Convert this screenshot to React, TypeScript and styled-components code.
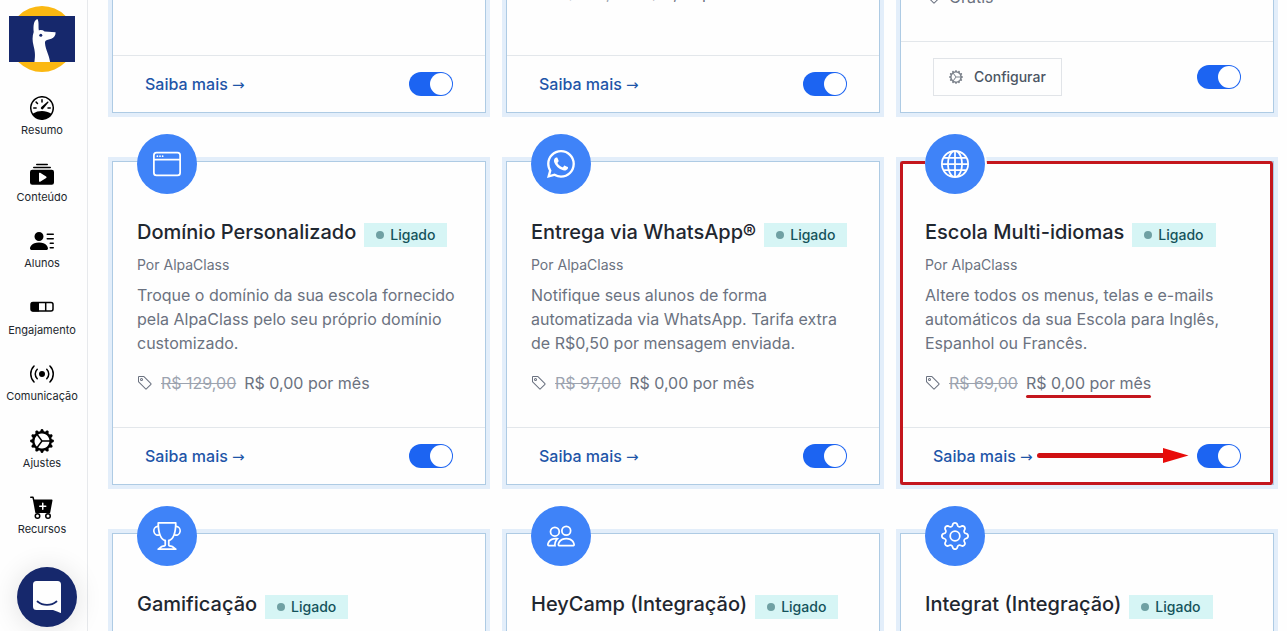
import React from "react";
import styled, { createGlobalStyle, css } from "styled-components";
import {
  BsBroadcast,
  BsCartPlusFill,
  BsCollectionPlayFill,
  BsGear,
  BsGearWideConnected,
  BsGlobe,
  BsPeople,
  BsPersonLinesFill,
  BsSpeedometer,
  BsTag,
  BsTrophy,
  BsWhatsapp,
  BsWindow,
} from "react-icons/bs";

const RED = "#c4161d";

const GlobalStyle = createGlobalStyle`
  *, *::before, *::after { box-sizing: border-box; }
  body {
    margin: 0;
    background: #fefefe;
    color: #1f2730;
    font-family: Inter, "Liberation Sans", sans-serif;
    font-size: 16px;
    line-height: 24px;
  }
  h2, p { margin: 0; }
  a { color: inherit; text-decoration: none; }
`;

const Page = styled.div`
  display: flex;
  height: 100vh;
  overflow: hidden;
`;

const Sidebar = styled.aside`
  display: flex;
  flex: none;
  flex-direction: column;
  align-items: center;
  gap: 24px;
  width: 88px;
  padding: 6px 3px 0 0;
  border-right: 1px solid #e7e9ec;
`;

const HomeLink = styled.a`
  display: flex;
`;

const Nav = styled.nav`
  display: flex;
  flex-direction: column;
  justify-content: space-between;
  height: 441px;
`;

const NavLink = styled.a`
  display: flex;
  flex-direction: column;
  align-items: center;
  gap: 2px;
  color: #000;
  svg {
    width: 24px;
    height: 24px;
  }
`;

const NavLabel = styled.span`
  font-size: 11px;
  line-height: 16px;
  color: #22272d;
`;

const Main = styled.main`
  flex: 1;
  min-width: 0;
  padding: 0 13px 0 24px;
`;

const Grid = styled.div`
  display: grid;
  grid-template-columns: repeat(3, minmax(0, 1fr));
  gap: 48px 20px;
  margin-top: -211px;
`;

const Medallion = styled.div`
  position: relative;
  display: grid;
  place-items: center;
  width: 60px;
  height: 60px;
  margin: -28px 0 23px;
  border-radius: 50%;
  background: #3f83f8;
  color: #fff;
  svg {
    width: 28px;
    height: 28px;
  }
`;

const Card = styled.article<{ $highlight?: boolean }>`
  position: relative;
  display: flex;
  flex-direction: column;
  min-height: 324px;
  border: 1px solid #aecbe4;
  background: #fefefe;
  box-shadow: 0 0 0 4px #e3eefa;
  ${(p) =>
    p.$highlight &&
    css`
      &::before {
        content: "";
        position: absolute;
        inset: -1px 0 -1px -1px;
        border: 3px solid ${RED};
        border-radius: 3px;
        pointer-events: none;
      }
      ${Medallion} {
        box-shadow: 1px 0 0 1px #fefefe;
      }
    `}
`;

const Body = styled.div<{ $end?: boolean; $bottom?: number }>`
  display: flex;
  flex: 1;
  flex-direction: column;
  align-items: flex-start;
  justify-content: ${(p) => (p.$end ? "flex-end" : "flex-start")};
  padding: 0 24px ${(p) => p.$bottom ?? 32}px;
`;

const TitleRow = styled.div`
  display: flex;
  align-items: flex-end;
  gap: 8px;
  margin-bottom: 8px;
`;

const Title = styled.h2`
  font-size: 20px;
  font-weight: 500;
  line-height: 30px;
  white-space: nowrap;
`;

const Badge = styled.span`
  display: inline-flex;
  align-items: center;
  gap: 6px;
  padding: 0 12px;
  background: #d6f5f5;
  color: #14535b;
  font-size: 14px;
  font-weight: 500;
  line-height: 24px;
  &::before {
    content: "";
    width: 8px;
    height: 8px;
    border-radius: 50%;
    background: #6fa0a3;
  }
`;

const Author = styled.p`
  margin-bottom: 8px;
  color: #6b7280;
  font-size: 14px;
  line-height: 20px;
`;

const Description = styled.p`
  margin-bottom: 16px;
  color: #6b7280;
`;

const PriceRow = styled.div`
  display: flex;
  align-items: center;
  gap: 8px;
  color: #6b7280;
  white-space: nowrap;
  svg {
    width: 16px;
    height: 16px;
  }
`;

const OldPrice = styled.s`
  color: #9ca3af;
`;

const Price = styled.span<{ $underlined?: boolean }>`
  position: relative;
  ${(p) =>
    p.$underlined &&
    css`
      &::after {
        content: "";
        position: absolute;
        right: 0;
        bottom: -3px;
        left: 0;
        height: 3px;
        border-radius: 2px;
        background: ${RED};
      }
    `}
`;

const Footer = styled.footer`
  display: flex;
  align-items: center;
  justify-content: space-between;
  padding: 16px 32px;
  border-top: 1px solid #e3e7eb;
`;

const LearnMore = styled.a`
  color: #1e55a8;
  font-weight: 500;
  white-space: nowrap;
`;

const LinkArrow = styled.span`
  font-family: "DejaVu Sans", sans-serif;
  font-size: 15px;
  font-weight: 400;
  line-height: 14px;
`;

const ConfigureButton = styled.button`
  display: inline-flex;
  align-items: center;
  gap: 11px;
  height: 38px;
  padding: 0 15px;
  border: 1px solid #e1e4e8;
  background: #fefefe;
  color: #4b5563;
  font: 500 14px/20px Inter, "Liberation Sans", sans-serif;
  svg {
    width: 14px;
    height: 14px;
    color: #7d838c;
  }
`;

const Toggle = styled.input`
  appearance: none;
  flex: none;
  width: 44px;
  height: 24px;
  margin: 0;
  padding: 1px;
  border-radius: 12px;
  background: #d1d5db;
  cursor: pointer;
  &::before {
    content: "";
    display: block;
    width: 22px;
    height: 22px;
    border-radius: 50%;
    background: #fff;
  }
  &:checked {
    background: #1c64f2;
  }
  &:checked::before {
    margin-left: auto;
  }
`;

const Arrow = styled.svg`
  flex: none;
  margin: 0 8px 0 auto;
`;

const ChatButton = styled.button`
  position: fixed;
  bottom: 4px;
  left: 17px;
  display: grid;
  place-items: center;
  width: 60px;
  height: 60px;
  padding: 0;
  border: 0;
  border-radius: 50%;
  background: #16286c;
  box-shadow: 0 2px 28px rgba(0, 0, 0, 0.12);
`;

function Logo() {
  return (
    <svg width="66" height="66" viewBox="0 0 66 66" role="img" aria-label="AlpaClass">
      <circle cx="33" cy="33" r="33" fill="#fbb812" />
      <path fill="#16286c" d="M0 10h66v46H0z" />
      <path
        fill="#fefefe"
        d="M25.4 56c1.2-7.500.4-11-.9-16.500-1.200-4.800-1.300-9 .2-13.500C24.200 20 24.600 14.300 28.400 13c1.900 3.200.7 7.600 1.500 11.400 2.200-.7 4.100-.200 5.700 1l11 .8c.2 2.900-1.600 5.700-4.300 6.500l-4.200 1.200c-1.800.6-2.300 1.600-2.100 3.300.6 6.600 4.200 11.600 5.100 18.800z"
      />
      <circle cx="31.800" cy="29.300" r="1.500" fill="#16286c" />
    </svg>
  );
}

function SegmentsIcon() {
  return (
    <svg viewBox="0 0 24 24" aria-hidden="true">
      <rect x="1" y="6.500" width="22" height="8.500" rx="2" fill="none" stroke="currentColor" strokeWidth="1.500" />
      <path d="M3 6h6v9.500H3a2 2 0 0 1-2-2V8a2 2 0 0 1 2-2z" fill="currentColor" />
      <path d="M15.700 6.500v8.500" stroke="currentColor" strokeWidth="1.500" />
    </svg>
  );
}

const navItems = [
  { label: "Resumo", icon: <BsSpeedometer /> },
  { label: "Conteúdo", icon: <BsCollectionPlayFill /> },
  { label: "Alunos", icon: <BsPersonLinesFill /> },
  { label: "Engajamento", icon: <SegmentsIcon /> },
  { label: "Comunicação", icon: <BsBroadcast /> },
  { label: "Ajustes", icon: <BsGearWideConnected /> },
  { label: "Recursos", icon: <BsCartPlusFill /> },
];

type App = {
  title: string;
  icon: React.ReactNode;
  description?: string;
  oldPrice?: string;
  highlight?: boolean;
};

const apps: App[] = [
  {
    title: "Domínio Personalizado",
    icon: <BsWindow />,
    description:
      "Troque o domínio da sua escola fornecido pela AlpaClass pelo seu próprio domínio customizado.",
    oldPrice: "R$ 129,00",
  },
  {
    title: "Entrega via WhatsApp®",
    icon: <BsWhatsapp />,
    description:
      "Notifique seus alunos de forma automatizada via WhatsApp. Tarifa extra de R$0,50 por mensagem enviada.",
    oldPrice: "R$ 97,00",
  },
  {
    title: "Escola Multi-idiomas",
    icon: <BsGlobe />,
    description:
      "Altere todos os menus, telas e e-mails automáticos da sua Escola para Inglês, Espanhol ou Francês.",
    oldPrice: "R$ 69,00",
    highlight: true,
  },
  { title: "Gamificação", icon: <BsTrophy /> },
  { title: "HeyCamp (Integração)", icon: <BsPeople /> },
  { title: "Integrat (Integração)", icon: <BsGear /> },
];

function CardFooter({ name, highlight }: { name: string; highlight?: boolean }) {
  return (
    <Footer>
      <LearnMore href="#">
        Saiba mais <LinkArrow>→</LinkArrow>
      </LearnMore>
      {highlight && (
        <Arrow width="152" height="16" viewBox="0 0 152 16" aria-hidden="true">
          <path d="M2.500 7.500H128" stroke="#d01012" strokeWidth="5" strokeLinecap="round" />
          <path d="M126 0l25.500 7.500L126 15z" fill="#e80c0a" />
        </Arrow>
      )}
      <Toggle type="checkbox" role="switch" defaultChecked aria-label={name} />
    </Footer>
  );
}

function AppCard({ app }: { app: App }) {
  return (
    <Card $highlight={app.highlight}>
      <Body>
        <Medallion>{app.icon}</Medallion>
        <TitleRow>
          <Title>{app.title}</Title>
          <Badge>Ligado</Badge>
        </TitleRow>
        {app.description && (
          <>
            <Author>Por AlpaClass</Author>
            <Description>{app.description}</Description>
            <PriceRow>
              <BsTag />
              <OldPrice>{app.oldPrice}</OldPrice>
              <Price $underlined={app.highlight}>R$ 0,00 por mês</Price>
            </PriceRow>
          </>
        )}
      </Body>
      {app.description && <CardFooter name={app.title} highlight={app.highlight} />}
    </Card>
  );
}

export default function App() {
  return (
    <Page>
      <GlobalStyle />
      <Sidebar>
        <HomeLink href="#">
          <Logo />
        </HomeLink>
        <Nav>
          {navItems.map((item) => (
            <NavLink href="#" key={item.label}>
              {item.icon}
              <NavLabel>{item.label}</NavLabel>
            </NavLink>
          ))}
        </Nav>
      </Sidebar>
      <Main>
        <Grid>
          <Card>
            <Body />
            <CardFooter name="Ligado" />
          </Card>
          <Card>
            <Body $end $bottom={50}>
              <PriceRow>
                <BsTag />
                <OldPrice>R$ 129,00</OldPrice>
                <Price>R$ 0,00 por mês</Price>
              </PriceRow>
            </Body>
            <CardFooter name="Ligado" />
          </Card>
          <Card>
            <Body $end>
              <PriceRow>
                <BsTag />
                <Price>Grátis</Price>
              </PriceRow>
            </Body>
            <Footer>
              <ConfigureButton type="button">
                <BsGearWideConnected />
                Configurar
              </ConfigureButton>
              <Toggle type="checkbox" role="switch" defaultChecked aria-label="Ligado" />
            </Footer>
          </Card>
          {apps.map((app) => (
            <AppCard app={app} key={app.title} />
          ))}
        </Grid>
      </Main>
      <ChatButton type="button" aria-label="Chat">
        <svg width="28" height="32" viewBox="0 0 28 32" aria-hidden="true">
          <path
            fill="#fefefe"
            d="M3.500 0h21A3.500 3.500 0 0 1 28 3.500V32s-4.500-1.500-8-3H3.500A3.500 3.500 0 0 1 0 25.500v-22A3.500 3.500 0 0 1 3.500 0z"
          />
          <path d="M4.500 20.500c5.500 4.500 13.500 4.500 19 0" fill="none" stroke="#16286c" strokeWidth="1.800" strokeLinecap="round" />
        </svg>
      </ChatButton>
    </Page>
  );
}
